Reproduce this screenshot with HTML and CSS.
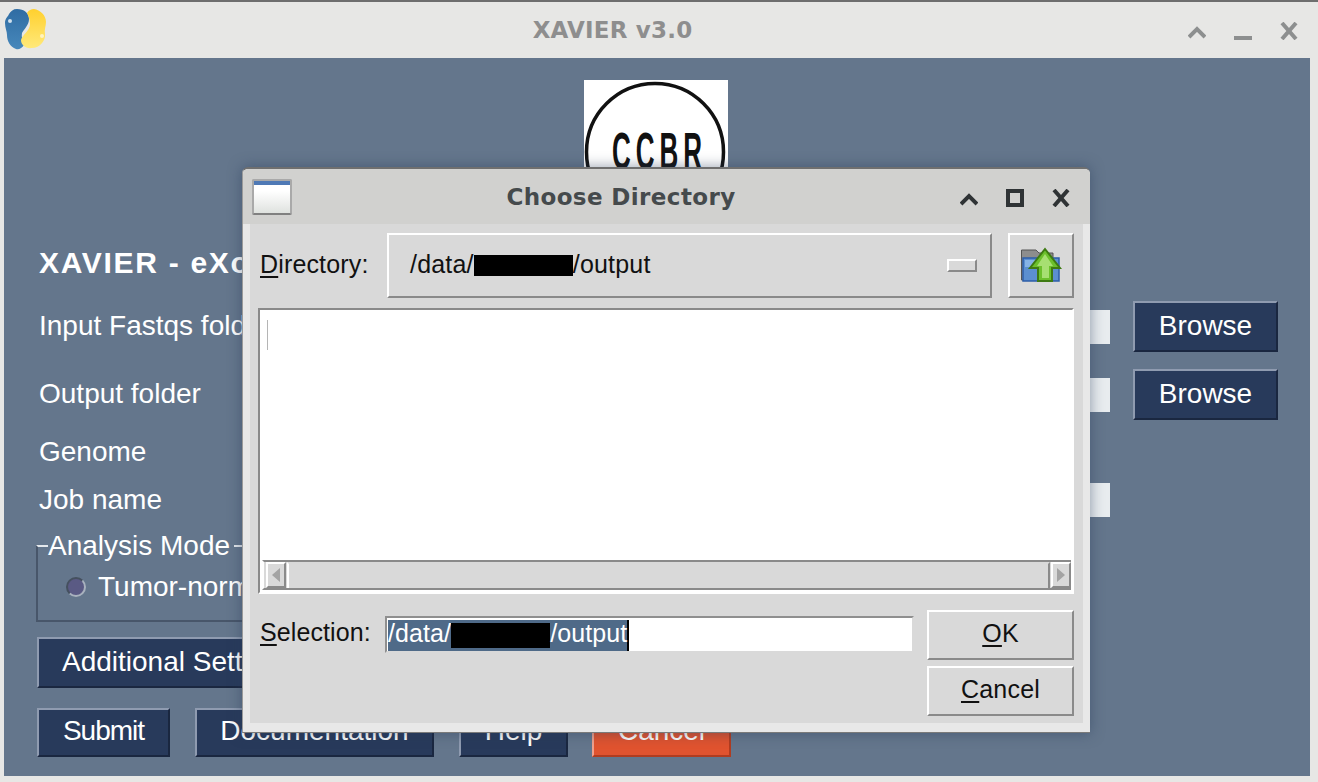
FILE: index.html
```html
<!DOCTYPE html>
<html>
    <head>
        <title>XAVIER v3.0</title>
        <link rel="stylesheet" href="styles.css">
    </head>
    <body>
        <!-- main window -->
        <div class="window">
            <div class="titlebar">
                <svg class="app-icon" viewBox="0 0 42 42" width="42" height="42">
                    <defs>
                        <linearGradient id="snakeBlue" x1="0" y1="0" x2="0" y2="1">
                            <stop offset="0" stop-color="#2f6ca3"/>
                            <stop offset="1" stop-color="#4788bb"/>
                        </linearGradient>
                        <linearGradient id="snakeYellow" x1="0" y1="0" x2="0" y2="1">
                            <stop offset="0" stop-color="#ffd02e"/>
                            <stop offset="1" stop-color="#ffe97a"/>
                        </linearGradient>
                    </defs>
                    <path fill="url(#snakeBlue)" d="M12 0 C19 0 24 4 24 10 C24 16 19 20 17 24 C16 28 18 32 19 36 C17 39 14 41 11 40 C5 38 2 32 2 26 C2 22 0 19 0 14 C0 9 3 8 4 5 C6 2 8 0 12 0 Z"/>
                    <circle cx="5" cy="12" r="2" fill="#cfe0ee"/>
                    <path fill="url(#snakeYellow)" d="M29 0 C35 1 41 6 41 13 C41 17 39 21 40 25 C41 31 35 39 27 39 C21 40 16 36 16 31 C17 26 25 22 25 15 C25 10 23 6 22 4 C24 1 26 0 29 0 Z"/>
                    <circle cx="37" cy="27" r="2" fill="#fff3c0"/>
                </svg>
                <div class="wm-title">XAVIER v3.0</div>
                <div class="wm-buttons wm-buttons-light">
                    <svg viewBox="0 0 18 18" width="18" height="18"><path d="M1 15 L9 7 L17 15" /></svg>
                    <svg viewBox="0 0 18 18" width="18" height="18"><path d="M0 16 H18" /></svg>
                    <svg viewBox="0 0 18 18" width="18" height="18"><path d="M2 1 L16 17 M16 1 L2 17" /></svg>
                </div>
            </div>

            <div class="content">
                <div class="logo">
                    <svg viewBox="0 0 144 144" width="144" height="144">
                        <circle cx="71" cy="72" r="68.5" fill="none" stroke="#111" stroke-width="3.5"/>
                        <text class="logo-text" transform="translate(28 89) scale(.5 1)">CCBR</text>
                    </svg>
                </div>

                <h1 class="heading">XAVIER - eXome Analysis</h1>

                <div class="row">
                    <label class="row-label">Input Fastqs folder</label>
                    <input class="entry" type="text">
                    <button class="btn btn-browse">Browse</button>
                </div>
                <div class="row row-second">
                    <label class="row-label">Output folder</label>
                    <input class="entry" type="text">
                    <button class="btn btn-browse">Browse</button>
                </div>
                <div class="row row-plain row-genome">
                    <label class="row-label">Genome</label>
                </div>
                <div class="row row-plain">
                    <label class="row-label">Job name</label>
                    <input class="entry" type="text">
                </div>

                <fieldset class="mode">
                    <legend>Analysis Mode</legend>
                    <span class="radio"></span>
                    <span class="radio-label">Tumor-normal pair</span>
                </fieldset>

                <button class="btn btn-settings">Additional Settings</button>

                <div class="actions">
                    <button class="btn btn-submit">Submit</button>
                    <button class="btn btn-docs">Documentation</button>
                    <button class="btn btn-help">Help</button>
                    <button class="btn btn-cancel">Cancel</button>
                </div>
            </div>
        </div>

        <!-- Choose Directory dialog, floats over the main window -->
        <div class="dialog">
            <div class="titlebar dialog-titlebar">
                <div class="dialog-icon"></div>
                <div class="wm-title dialog-title">Choose Directory</div>
                <div class="wm-buttons">
                    <svg viewBox="0 0 18 18" width="18" height="18"><path d="M1 15 L9 7 L17 15" /></svg>
                    <svg viewBox="0 0 18 18" width="18" height="18"><path class="square" d="M2 2 H16 V16 H2 Z" /></svg>
                    <svg viewBox="0 0 18 18" width="18" height="18"><path d="M2 1 L16 17 M16 1 L2 17" /></svg>
                </div>
            </div>

            <div class="dialog-body">
                <div class="dir-row">
                    <label class="dlg-label"><u>D</u>irectory:</label>
                    <div class="raised dir-menu">
                        <span class="dir-path">/data/<span class="redact"></span>/output</span>
                        <span class="raised dir-indicator"></span>
                    </div>
                    <div class="raised dir-up">
                        <svg viewBox="0 0 42 38" width="42" height="38">
                            <path fill="#8d8d8d" stroke="#555" d="M1.5 3 H16 L19 6 H33 V33 H1.5 Z"/>
                            <path fill="#5c8fd0" stroke="#2d5ea8" stroke-width="1.5" d="M3 11 H39 V34 H3 Z"/>
                            <path fill="#86b3e6" d="M5 13 H18 V20 H5 Z"/>
                            <path fill="#6cc02c" stroke="#3e7a12" stroke-width="2" d="M25 2 L40 21 H32 V34 H18 V21 H10 Z"/>
                            <path fill="#a7df72" d="M25 7 L33 19 H29 V31 H22 V19 H17 Z"/>
                        </svg>
                    </div>
                </div>

                <div class="listbox">
                    <div class="list-area"><span class="list-cursor"></span></div>
                    <div class="hscroll">
                        <span class="raised scroll-btn"><svg viewBox="0 0 10 14" width="10" height="14"><path d="M9 0 V14 L1 7 Z" fill="#a3a3a3"/></svg></span>
                        <span class="raised scroll-thumb"></span>
                        <span class="raised scroll-btn"><svg viewBox="0 0 10 14" width="10" height="14"><path d="M1 0 V14 L9 7 Z" fill="#a3a3a3"/></svg></span>
                    </div>
                </div>

                <div class="bottom-row">
                    <label class="dlg-label sel-label"><u>S</u>election:</label>
                    <div class="sel-entry"><span class="sel-text">/data/<span class="redact redact-sel"></span>/output</span></div>
                    <div class="dlg-buttons">
                        <div class="raised dlg-btn"><span><u>O</u>K</span></div>
                        <div class="raised dlg-btn"><span><u>C</u>ancel</span></div>
                    </div>
                </div>
            </div>
        </div>
    </body>
</html>
```

FILE: styles.css
```css
* {
    box-sizing: border-box;
}

body {
    margin: 0;
    width: 1318px;
    height: 782px;
    overflow: hidden;
    position: relative;
    background-color: #e7e7e5;
    font-family: "Liberation Sans", Arial, sans-serif;
}

/* main window */
.window {
    height: 782px;
    border-top: 2px solid #6e6e6e;
    padding: 0 8px 6px 4px;
    display: flex;
    flex-direction: column;
}

.titlebar {
    height: 56px;
    margin-left: -4px;
    margin-right: -8px;
    padding: 0 20px 0 5px;
    display: flex;
    align-items: center;
    flex-shrink: 0;
}

.app-icon {
    flex-shrink: 0;
}

.wm-title {
    flex: 1;
    text-align: center;
    font-family: "DejaVu Sans", sans-serif;
    font-weight: bold;
    font-size: 23px;
    color: #8e8e8e;
    padding-right: 10px;
    letter-spacing: .2px;
}

.wm-buttons {
    display: flex;
    gap: 28px;
    width: 110px;
    margin-top: 2px;
}

.wm-buttons svg {
    fill: none;
    stroke: #2f3335;
    stroke-width: 4;
}

.wm-buttons-light svg {
    stroke: #8d8f8f;
}

.content {
    flex: 1;
    background-color: #64768c;
    color: #fff;
    font-size: 28px;
    padding-left: 33px;
    overflow: hidden;
}

.logo {
    width: 144px;
    height: 144px;
    margin: 22px 0 0 547px;
    background-color: #fff;
}

.logo-text {
    font-family: "Liberation Sans", sans-serif;
    font-size: 52px;
    font-weight: bold;
    letter-spacing: 10px;
    fill: #111;
}

.heading {
    margin: 20px 0 0 2px;
    height: 38px;
    line-height: 38px;
    font-size: 30px;
    font-weight: bold;
    letter-spacing: 1.7px;
}

.row {
    display: flex;
    align-items: center;
    height: 51px;
    margin-top: 19px;
}

.row-second {
    margin-top: 17px;
}

.row-plain {
    height: 48px;
    margin-top: 0;
}

.row-genome {
    margin-top: 8px;
}

.row-label {
    width: 400px;
    margin-left: 2px;
    padding-bottom: 2px;
}

.row-plain .row-label {
    padding-bottom: 0;
}

.entry {
    width: 671px;
    height: 34px;
    margin-left: 0;
    border: none;
    background-color: #e8ecef;
}

.btn {
    font-family: inherit;
    font-size: 28px;
    color: #fff;
    background-color: #283a5b;
    border-style: solid;
    border-width: 2px;
    border-color: #8f9bb0 #1a2740 #1a2740 #8f9bb0;
    padding: 0 0 1px 0;
}

.btn-browse {
    width: 145px;
    height: 51px;
    margin-left: 23px;
}

/* the legend sits on the top line, so the frame starts above its visible line */
.mode {
    width: 800px;
    height: 89px;
    margin: 9px 0 0 -1px;
    padding: 12px 0 0 28px;
    border: 2px solid #48566a;
    border-top-color: #e4e8ec;
    border-right: none;
    display: flex;
    align-items: flex-start;
    gap: 12px;
}

.mode legend {
    padding: 0 4px 0 0;
    margin-left: -18px;
    line-height: 26px;
}

.radio {
    width: 20px;
    height: 20px;
    margin-top: 6px;
    border-radius: 50%;
    background-color: #5a5a84;
    border: 2px solid;
    border-color: #45505f #a9b2be #a9b2be #45505f;
}

.radio-label {
    line-height: 32px;
}

.btn-settings {
    display: block;
    width: 330px;
    height: 51px;
    margin-top: 15px;
    text-align: left;
    padding-left: 23px;
}

.actions {
    display: flex;
    margin-top: 20px;
}

.btn-submit {
    width: 133px;
    height: 49px;
    letter-spacing: -1px;
    padding-bottom: 3px;
}

.btn-docs {
    width: 239px;
    height: 49px;
    margin-left: 25px;
    padding-bottom: 3px;
}

.btn-help {
    width: 109px;
    height: 49px;
    margin-left: 25px;
    padding-bottom: 3px;
}

.btn-cancel {
    width: 139px;
    height: 49px;
    margin-left: 24px;
    padding-bottom: 3px;
    background-color: #e0532f;
    border-color: #f0a08c #b03c20 #b03c20 #f0a08c;
}

/* dialog */
.dialog {
    position: absolute;
    left: 242px;
    top: 167px;
    width: 848px;
    height: 566px;
    background-color: #e8e8e8;
    border-top: 2px solid #6f6f6f;
    border-bottom: 1px solid #7a7a7a;
    border-left: 1px solid #9a9a9a;
    border-radius: 6px 6px 0 0;
    box-shadow: 0 0 14px rgba(40, 60, 90, .5);
    display: flex;
    flex-direction: column;
}

.dialog-titlebar {
    height: 55px;
    margin: 0;
    padding: 0 20px 0 9px;
    background-color: #d1d1cf;
    border-radius: 5px 5px 0 0;
}

.dialog-icon {
    width: 40px;
    height: 36px;
    border: 2px solid #a9a9a9;
    border-bottom-color: #808080;
    border-radius: 2px;
    background: linear-gradient(#4f79b5 0, #4f79b5 4px, #fff 4px, #fff 10px, #dfe2df 100%);
}

.dialog-title {
    color: #454a4c;
    padding-right: 10px;
    letter-spacing: .4px;
}

.dialog-body {
    flex: 1;
    margin: 0 7px 9px 7px;
    background-color: #d9d9d9;
    padding: 9px 8px 0 8px;
    font-size: 25px;
    color: #111;
}

.raised {
    background-color: #d9d9d9;
    border: 2px solid;
    border-color: #fff #8a8a8a #8a8a8a #fff;
}

.dir-row {
    display: flex;
    align-items: center;
    height: 65px;
}

.dlg-label {
    width: 129px;
    padding: 0 0 3px 2px;
    letter-spacing: .15px;
}

u {
    text-underline-offset: 3px;
}

.dir-menu {
    width: 605px;
    height: 65px;
    display: flex;
    align-items: center;
    padding: 0 13px 0 21px;
}

.dir-path {
    flex: 1;
    display: flex;
    align-items: center;
    letter-spacing: .2px;
    padding-bottom: 3px;
}

.redact {
    display: inline-block;
    width: 99px;
    height: 21px;
    margin-top: 3px;
    background-color: #000;
}

.dir-indicator {
    width: 30px;
    height: 13px;
}

.dir-up {
    width: 66px;
    height: 65px;
    margin-left: 16px;
    display: flex;
    align-items: center;
    justify-content: center;
}

.listbox {
    height: 286px;
    margin: 10px 1px 0 0;
    background-color: #fff;
    border: 2px solid;
    border-color: #8a8a8a #fff #fff #8a8a8a;
    display: flex;
    flex-direction: column;
    padding: 0 0 2px 2px;
}

.list-area {
    flex: 1;
    padding: 10px 0 0 5px;
}

.list-cursor {
    display: block;
    width: 1px;
    height: 30px;
    background-color: #b5b5b5;
}

.hscroll {
    height: 30px;
    background-color: #d9d9d9;
    border-top: 2px solid #8a8a8a;
    border-bottom: 2px solid #8a8a8a;
    border-left: 2px solid #fff;
    padding-left: 2px;
    margin-right: 1px;
    display: flex;
    align-items: stretch;
}

.scroll-btn {
    width: 20px;
    display: flex;
    align-items: center;
    justify-content: center;
}

.scroll-thumb {
    flex: 1;
    margin: 0 1px;
    border-top-color: #d9d9d9;
    border-bottom: none;
}

.bottom-row {
    display: flex;
    margin-top: 16px;
}

.sel-label {
    width: 127px;
    padding-top: 8px;
    letter-spacing: .1px;
}

.sel-entry {
    width: 529px;
    height: 37px;
    margin-top: 6px;
    padding: 1px;
    background-color: #fff;
    border: 2px solid;
    border-color: #8f8f8f #d9d9d9 #d9d9d9 #8f8f8f;
}

.sel-text {
    height: 31px;
    display: inline-flex;
    align-items: center;
    background-color: #4f6a88;
    color: #fff;
    letter-spacing: .1px;
    border-right: 2px solid #000;
    padding-bottom: 3px;
}

.redact-sel {
    height: 25px;
}

.dlg-buttons {
    margin-left: 13px;
    display: flex;
    flex-direction: column;
    gap: 6px;
}

.dlg-btn {
    width: 147px;
    height: 50px;
    display: flex;
    align-items: center;
    justify-content: center;
    letter-spacing: .2px;
    padding-bottom: 3px;
}
```
